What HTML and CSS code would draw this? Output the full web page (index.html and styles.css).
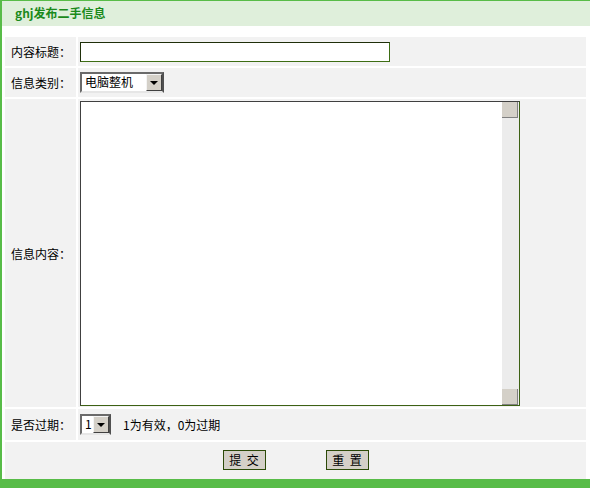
FILE: index.html
```html
<!DOCTYPE html>
<html lang="zh-CN">
<head>
<meta charset="utf-8"/>
<title>ghj发布二手信息</title>
<link rel="stylesheet" href="styles.css">
</head>
<body>
<div class="wrap">
  <div class="head">ghj发布二手信息</div>

  <form class="form">
    <div class="lbl">内容标题：</div>
    <div class="val"><input type="text" class="txt"></div>

    <div class="lbl">信息类别：</div>
    <div class="val">
      <span class="sel sel-wide"><span class="sel-text">电脑整机</span><span class="sel-btn"><i></i></span></span>
    </div>

    <div class="lbl">信息内容：</div>
    <div class="val">
      <div class="area">
        <textarea></textarea>
        <div class="sbar">
          <span class="sbtn"></span>
          <span class="strack"></span>
          <span class="sbtn"></span>
        </div>
      </div>
    </div>

    <div class="lbl">是否过期：</div>
    <div class="val">
      <span class="sel sel-small"><span class="sel-text">1</span><span class="sel-btn"><i></i></span></span>
      <span class="hint">1为有效，0为过期</span>
    </div>

    <div class="btns">
      <button type="button">提&nbsp;&nbsp;交</button>
      <button type="button">重&nbsp;&nbsp;置</button>
    </div>
  </form>

  <div class="foot"></div>
</div>
</body>
</html>
```

FILE: styles.css
```css
:root{--green:#58bc48;--row:#f2f2f2;--btn:#d4d0c8;}
*{margin:0;padding:0;box-sizing:border-box;}
body{font-family:"Noto Sans CJK TC","Noto Sans CJK SC","Liberation Sans",sans-serif;font-size:12px;color:#000;background:#fff;}
.wrap{width:590px;height:488px;border-top:1px solid var(--green);border-left:2px solid var(--green);display:flex;flex-direction:column;}
.head{height:25px;background:#dfefdb;color:#1b8a1b;font-weight:bold;font-size:12px;line-height:24px;padding-left:13px;}
.form{margin:9px 2px 0 1px;padding:2px 2px 0 2px;display:grid;grid-template-columns:71px 1fr;grid-template-rows:29px 29px 308px 31px 37px;gap:2px;}
.lbl{background:var(--row);display:flex;align-items:center;padding-left:6px;}
.val{background:var(--row);display:flex;align-items:center;padding-left:2px;}
.txt{width:310px;height:20px;border:1px solid;border-color:#1f2f0a #3d6d14 #3d6d14 #1f2f0a;background:#fff;outline:none;}
.sel{display:flex;height:21px;border:2px solid;border-color:#6a6a6a #505050 #e6e6e6 #6a6a6a;background:#fff;}
.sel-wide{width:84px;}
.sel-small{width:31px;}
.sel-text{flex:1;padding-left:3px;line-height:16px;font-size:12px;}
.sel-btn{width:16px;background:var(--btn);border:1px solid;border-color:#f4f4f4 #404040 #404040 #f4f4f4;display:flex;align-items:center;justify-content:center;}
.sel-btn i{width:0;height:0;border-left:4px solid transparent;border-right:4px solid transparent;border-top:4px solid #000;margin-top:1px;}
.hint{margin-left:12px;}
.area{width:440px;height:305px;display:flex;border:1px solid;border-color:#404040 #3d6114 #3d6114 #404040;background:#fff;}
.area textarea{flex:1;border:none;resize:none;outline:none;font:inherit;background:#fff;}
.sbar{width:17px;display:flex;flex-direction:column;background:#ececec;}
.sbtn{height:16px;width:16px;background:var(--btn);border-right:1px solid #808080;border-bottom:1px solid #808080;}
.strack{flex:1;}
.btns{grid-column:1 / 3;background:var(--row);display:flex;justify-content:center;align-items:flex-start;padding-top:8px;gap:60px;}
.btns button{width:43px;height:20px;background:var(--btn);border:1px solid #2c4a08;font-family:inherit;font-size:12px;line-height:16px;cursor:pointer;}
.foot{margin-top:auto;height:9px;background:var(--green);}
```
